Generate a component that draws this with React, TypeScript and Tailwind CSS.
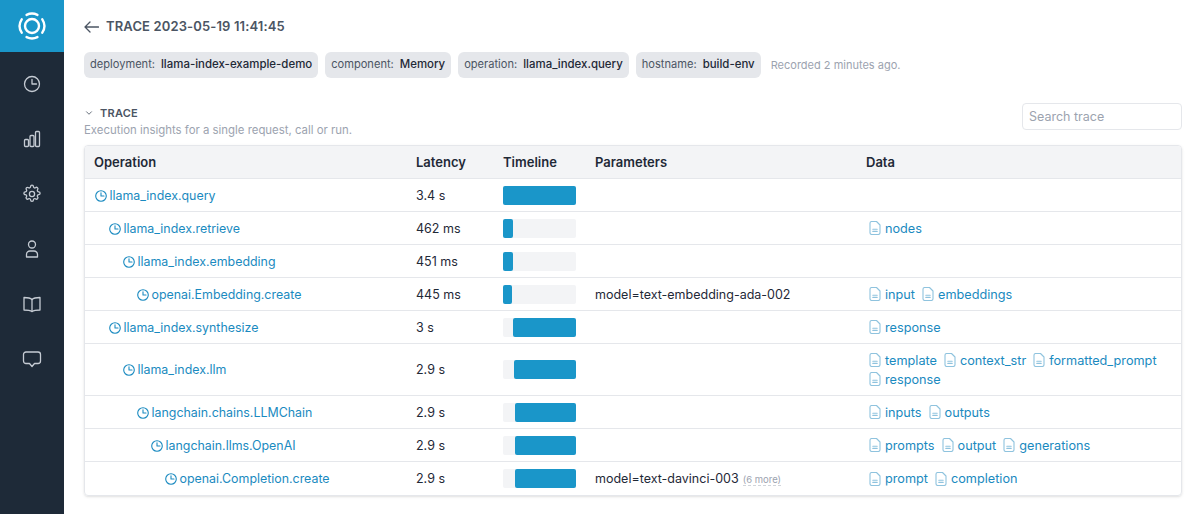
import { ChevronDown } from 'lucide-react'

type Row = {
  name: string
  depth: number
  latency: string
  offset: number
  width: number
  params?: string
  more?: string
  data: string[]
}

const rows: Row[] = [
  { name: 'llama_index.query', depth: 0, latency: '3.4 s', offset: 0, width: 73, data: [] },
  { name: 'llama_index.retrieve', depth: 1, latency: '462 ms', offset: 0, width: 10, data: ['nodes'] },
  { name: 'llama_index.embedding', depth: 2, latency: '451 ms', offset: 0, width: 10, data: [] },
  { name: 'openai.Embedding.create', depth: 3, latency: '445 ms', offset: 0, width: 9, params: 'model=text-embedding-ada-002', data: ['input', 'embeddings'] },
  { name: 'llama_index.synthesize', depth: 1, latency: '3 s', offset: 10, width: 63, data: ['response'] },
  { name: 'llama_index.llm', depth: 2, latency: '2.9 s', offset: 11, width: 62, data: ['template', 'context_str', 'formatted_prompt', 'response'] },
  { name: 'langchain.chains.LLMChain', depth: 3, latency: '2.9 s', offset: 12, width: 61, data: ['inputs', 'outputs'] },
  { name: 'langchain.llms.OpenAI', depth: 4, latency: '2.9 s', offset: 12, width: 61, data: ['prompts', 'output', 'generations'] },
  { name: 'openai.Completion.create', depth: 5, latency: '2.9 s', offset: 12, width: 61, params: 'model=text-davinci-003', more: '(6 more)', data: ['prompt', 'completion'] },
]

const tags = [
  ['deployment:', 'llama-index-example-demo'],
  ['component:', 'Memory'],
  ['operation:', 'llama_index.query'],
  ['hostname:', 'build-env'],
]

function Logo() {
  return (
    <svg width="28" height="28" viewBox="0 0 28 28" fill="none" stroke="white" strokeLinecap="round" strokeWidth="2.4">
      <circle cx="14" cy="14" r="7" />
      <path d="M8.6 2.9a12.3 12.3 0 0 1 10.8 0" />
      <path d="M8.6 25.1a12.3 12.3 0 0 0 10.8 0" />
      <path d="M3.7 7.3a12.3 12.3 0 0 0 0 13.4" />
      <path d="M24.3 7.3a12.3 12.3 0 0 1 0 13.4" />
    </svg>
  )
}

function SideIcon({ children }: { children: React.ReactNode }) {
  return (
    <div className="h-[55px] flex items-center justify-center text-[#c5cbd3]">
      <svg width="20" height="20" viewBox="0 0 20 20" fill="none" stroke="currentColor" strokeWidth="1.3" strokeLinecap="round" strokeLinejoin="round">
        {children}
      </svg>
    </div>
  )
}

function SpanClock() {
  return (
    <svg className="shrink-0" width="12" height="12" viewBox="0 0 12 12" fill="none" stroke="#1a8ac0" strokeWidth="1.1" strokeLinecap="round" strokeLinejoin="round">
      <circle cx="6" cy="6" r="5.3" />
      <path d="M6 2.8V6h3" />
    </svg>
  )
}

function DocIcon() {
  return (
    <svg className="shrink-0" width="12" height="14" viewBox="0 0 12 14" fill="none" stroke="#8fc3de" strokeWidth="1.1" strokeLinecap="round" strokeLinejoin="round">
      <path d="M1 2.2A1.7 1.7 0 0 1 2.7.5h4.8L11 4v7.8a1.7 1.7 0 0 1-1.7 1.7H2.7A1.7 1.7 0 0 1 1 11.8z" />
      <path d="M3.8 8.2h4.4M3.8 10.4h4.4" />
    </svg>
  )
}

export default function App() {
  return (
    <div className="h-[514px] w-[1200px] flex overflow-hidden bg-white font-['Inter',sans-serif] text-[13px] text-[#1f2937]">
      <aside className="w-[64px] shrink-0 bg-[#1e2a38]">
        <div className="h-[52px] bg-[#1a96c9] flex items-center justify-center">
          <Logo />
        </div>
        <div className="pt-[4px]">
          <SideIcon>
            <circle cx="10" cy="10" r="7.5" />
            <path d="M10 5.5V10h4.5" />
          </SideIcon>
          <SideIcon>
            <rect x="2.5" y="10.5" width="4" height="7" rx="1" />
            <rect x="8" y="6.5" width="4" height="11" rx="1" />
            <rect x="13.5" y="2.5" width="4" height="15" rx="1" />
          </SideIcon>
          <SideIcon>
            <path d="M8.6 2.6a1.4 1.4 0 0 1 2.8 0 1.4 1.4 0 0 0 2.1 1.2 1.4 1.4 0 0 1 2 2 1.4 1.4 0 0 0 1.2 2.1 1.4 1.4 0 0 1 0 2.8 1.4 1.4 0 0 0-1.2 2.1 1.4 1.4 0 0 1-2 2 1.4 1.4 0 0 0-2.1 1.2 1.4 1.4 0 0 1-2.8 0 1.4 1.4 0 0 0-2.1-1.2 1.4 1.4 0 0 1-2-2 1.4 1.4 0 0 0-1.2-2.1 1.4 1.4 0 0 1 0-2.8 1.4 1.4 0 0 0 1.2-2.1 1.4 1.4 0 0 1 2-2 1.4 1.4 0 0 0 2.1-1.2z" />
            <circle cx="10" cy="10" r="2.6" />
          </SideIcon>
          <SideIcon>
            <circle cx="10" cy="5.5" r="3.5" />
            <path d="M4.5 18v-2.5a3.5 3.5 0 0 1 3.5-3.5h4a3.5 3.5 0 0 1 3.5 3.5V18z" />
          </SideIcon>
          <SideIcon>
            <path d="M10 5.5C8.5 4 6 3.5 2 3.5V16c4 0 6.5.5 8 1.5 1.5-1 4-1.5 8-1.5V3.5c-4 0-6.5.5-8 2z" />
            <path d="M10 5.5v12" />
          </SideIcon>
          <SideIcon>
            <path d="M4 3h12a2.5 2.5 0 0 1 2.5 2.5V12a2.5 2.5 0 0 1-2.5 2.5h-3.5l-2.5 3-2.5-3H4A2.5 2.5 0 0 1 1.5 12V5.5A2.5 2.5 0 0 1 4 3z" />
          </SideIcon>
        </div>
      </aside>

      <main className="flex-1 pl-5 pr-[18px] pt-[18px]">
        <div className="flex items-center gap-[7px] h-[18px] text-[#4b5563]">
          <svg width="15" height="12" viewBox="0 0 15 12" fill="none" stroke="currentColor" strokeWidth="1.3" strokeLinecap="round" strokeLinejoin="round">
            <path d="M6 1 1 6l5 5M1 6h13.5" />
          </svg>
          <h1 className="text-[13px] font-semibold tracking-[0.01em]">TRACE 2023-05-19 11:41:45</h1>
        </div>

        <div className="flex items-center gap-[7px] mt-[16px]">
          {tags.map(([k, v]) => (
            <span key={k} className="h-[26px] flex items-baseline gap-[6px] rounded-md bg-[#e5e7eb] px-[6px] text-[11.1px] leading-[25px] text-[#4b5563]">
              {k}
              <span className="text-[11.45px] font-medium text-[#1f2937]">{v}</span>
            </span>
          ))}
          <span className="ml-[3px] text-[11px] text-[#9ca3af]">Recorded 2 minutes ago.</span>
        </div>

        <div className="flex items-start justify-between mt-[25px] h-[37px]">
          <div className="pt-[2px]">
            <div className="flex items-center gap-[6px] text-[11px] font-semibold text-[#4b5563] tracking-[0.02em]">
              <ChevronDown size={10} strokeWidth={2} />
              TRACE
            </div>
            <p className="text-[11.4px] text-[#9ca3af]">Execution insights for a single request, call or run.</p>
          </div>
          <input
            placeholder="Search trace"
            className="w-[160px] h-[27px] rounded border border-[#e5e7eb] px-[6px] text-[12.5px] placeholder:text-[#9ca3af]"
          />
        </div>

        <div className="mt-[5px] w-[1098px] rounded border border-[#e5e7eb] shadow-sm overflow-hidden">
          <div className="grid grid-cols-[322px_87px_92px_271px_1fr] h-[33px] pt-[1px] items-center bg-[#f3f4f6] font-semibold text-[13px] border-b border-[#e5e7eb]">
            <div className="pl-[9px]">Operation</div>
            <div className="pl-[9px]">Latency</div>
            <div className="pl-[9px]">Timeline</div>
            <div className="pl-[9px]">Parameters</div>
            <div className="pl-[9px]">Data</div>
          </div>
          {rows.map((row, i) => (
            <div
              key={row.name}
              className={`grid grid-cols-[322px_87px_92px_271px_1fr] items-center ${row.data.length > 3 ? 'h-[52px]' : 'h-[33px]'} ${i < rows.length - 1 ? 'border-b border-[#e5e7eb]' : ''}`}
            >
              <div className="flex items-center gap-[2.5px] pt-[2px] text-[#1a8ac0] text-[12.4px]" style={{ paddingLeft: 10 + row.depth * 14 }}>
                <SpanClock />
                {row.name}
              </div>
              <div className="pl-[9px] pt-[2px] text-[12.5px]">{row.latency}</div>
              <div className="pl-[9px]">
                <div className="w-[73px] h-[19px] bg-[#f3f4f6] rounded-[2px]">
                  <div className="h-full bg-[#1a96c9] rounded-[2px]" style={{ marginLeft: row.offset, width: row.width }} />
                </div>
              </div>
              <div className="pl-[9px] pt-[2px] text-[12.5px] whitespace-nowrap">
                {row.params}
                {row.more && <span className="ml-[4px] text-[9.5px] text-[#9ca3af] border-b border-dashed border-[#d1d5db]">{row.more}</span>}
              </div>
              <div className="pl-[12px] pr-[20px] flex flex-wrap gap-x-[7px] gap-y-[4px] text-[#1a8ac0] text-[12.7px]">
                {row.data.map((d) => (
                  <span key={d} className="flex items-center gap-[4px] leading-[15px]">
                    <DocIcon />
                    {d}
                  </span>
                ))}
              </div>
            </div>
          ))}
        </div>
      </main>
    </div>
  )
}
